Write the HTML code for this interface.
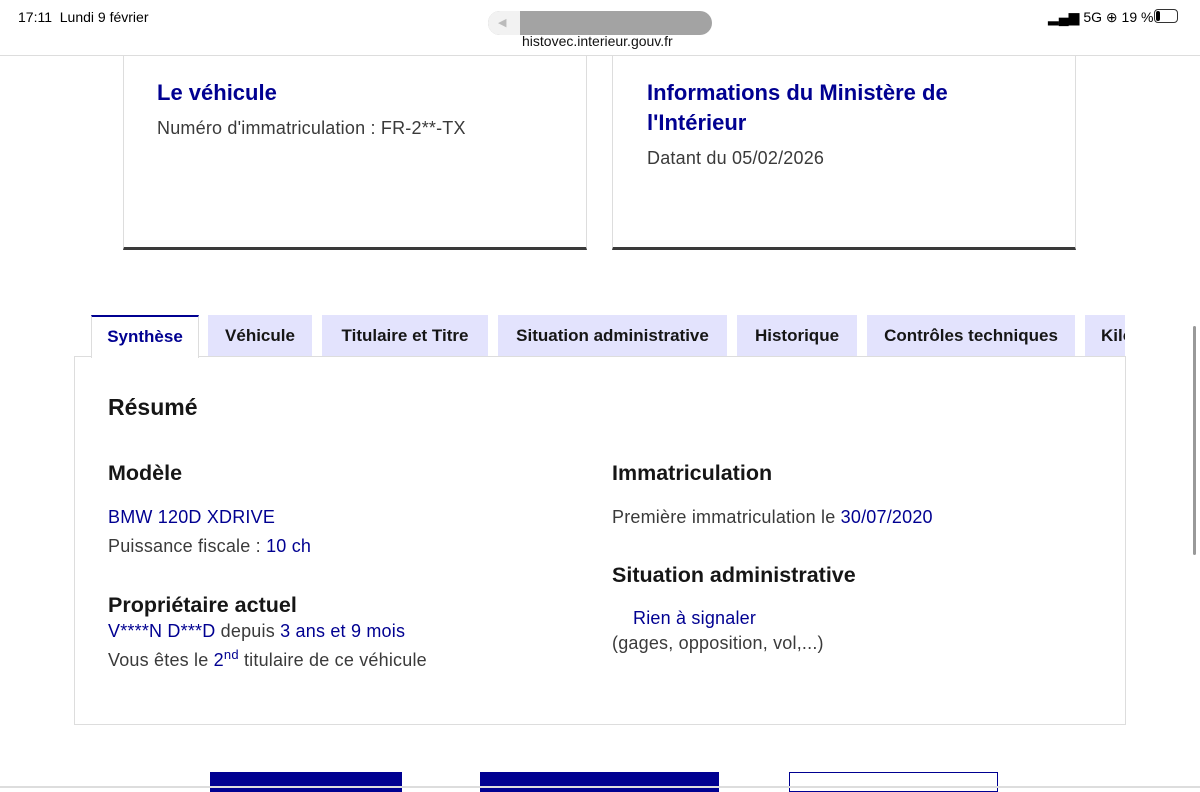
<!DOCTYPE html>
<html><head><meta charset="utf-8"><style>
*{margin:0;padding:0;box-sizing:border-box}
body{width:1200px;height:788px;overflow:hidden;background:#fff;font-family:"Liberation Sans",sans-serif;position:relative;color:#3a3a3a}
.a{position:absolute;white-space:nowrap}
.t{font-size:18px;letter-spacing:0.2px}
.b{color:#000091}
.h{color:#161616;font-weight:bold;font-size:21.5px}
.tab{position:absolute;top:315px;height:41px;background:#e3e3fd;color:#161616;font-weight:bold;font-size:17px;line-height:41px;text-align:center;overflow:hidden}
</style></head><body>
<div class="a" style="left:18px;top:9px;font-size:14px;color:#000">17:11&nbsp; Lundi 9 février</div>
<div class="a" style="left:488px;top:11px;width:224px;height:24px;border-radius:12px;background:#a3a3a3"></div>
<div class="a" style="left:488px;top:11px;width:32px;height:24px;border-radius:12px 0 0 12px;background:#f2f2f2;font-size:11px;color:#bbb;line-height:24px;padding-left:10px">◀</div>
<div class="a" style="left:522px;top:33px;font-size:14px;color:#111">histovec.interieur.gouv.fr</div>
<div class="a" style="left:1048px;top:9px;font-size:14px;color:#000">▂▄▆ 5G ⊕ 19 %</div>
<div class="a" style="left:1154px;top:9px;width:24px;height:14px;border:1px solid #333;border-radius:4px"><div style="width:4px;height:10px;margin:1px;background:#000;border-radius:2px"></div></div>
<div class="a" style="left:0;top:55px;width:1200px;height:1px;background:#ddd"></div>

<div class="a" style="left:123px;top:56px;width:464px;height:194px;border-left:1px solid #ddd;border-right:1px solid #ddd;border-bottom:3px solid #3a3a3a"></div>
<div class="a" style="left:612px;top:56px;width:464px;height:194px;border-left:1px solid #ddd;border-right:1px solid #ddd;border-bottom:3px solid #3a3a3a"></div>
<div class="a b" style="left:157px;top:80px;font-size:22px;font-weight:bold">Le véhicule</div>
<div class="a t" style="left:157px;top:118px">Numéro d'immatriculation : FR-2**-TX</div>
<div class="a b" style="left:647px;top:78px;font-size:22px;font-weight:bold;line-height:30px">Informations du Ministère de<br>l'Intérieur</div>
<div class="a t" style="left:647px;top:148px">Datant du 05/02/2026</div>

<div class="a" style="left:74px;top:356px;width:1052px;height:369px;border:1px solid #ddd"></div>
<div class="tab" style="left:91px;width:108px;background:#fff;color:#000091;border-top:2px solid #000091;border-left:1px solid #ddd;border-right:1px solid #ddd;height:43px;line-height:39px">Synthèse</div>
<div class="tab" style="left:208px;width:104px">Véhicule</div>
<div class="tab" style="left:322px;width:166px">Titulaire et Titre</div>
<div class="tab" style="left:498px;width:229px">Situation administrative</div>
<div class="tab" style="left:737px;width:120px">Historique</div>
<div class="tab" style="left:867px;width:208px">Contrôles techniques</div>
<div class="tab" style="left:1085px;width:40px;text-align:left;padding-left:16px">Kilo</div>

<div class="a h" style="left:108px;top:394px;font-size:23px">Résumé</div>
<div class="a h" style="left:108px;top:461px">Modèle</div>
<div class="a b t" style="left:108px;top:507px">BMW 120D XDRIVE</div>
<div class="a t" style="left:108px;top:536px">Puissance fiscale : <span class="b">10 ch</span></div>
<div class="a h" style="left:108px;top:593px">Propriétaire actuel</div>
<div class="a t" style="left:108px;top:621px"><span class="b">V****N D***D</span> depuis <span class="b">3 ans et 9 mois</span></div>
<div class="a t" style="left:108px;top:647px">Vous êtes le <span class="b">2<sup style="font-size:13px">nd</sup></span> titulaire de ce véhicule</div>

<div class="a h" style="left:612px;top:461px">Immatriculation</div>
<div class="a t" style="left:612px;top:507px">Première immatriculation le <span class="b">30/07/2020</span></div>
<div class="a h" style="left:612px;top:563px">Situation administrative</div>
<div class="a b t" style="left:633px;top:608px">Rien à signaler</div>
<div class="a t" style="left:612px;top:633px">(gages, opposition, vol,...)</div>

<div class="a" style="left:210px;top:772px;width:192px;height:20px;background:#000091"></div>
<div class="a" style="left:480px;top:772px;width:239px;height:20px;background:#000091"></div>
<div class="a" style="left:789px;top:772px;width:209px;height:20px;border:1px solid #000091"></div>
<div class="a" style="left:0;top:786px;width:1200px;height:2px;background:#ddd"></div>
<div class="a" style="left:1193px;top:326px;width:3px;height:229px;background:#999;border-radius:2px"></div>
</body></html>
